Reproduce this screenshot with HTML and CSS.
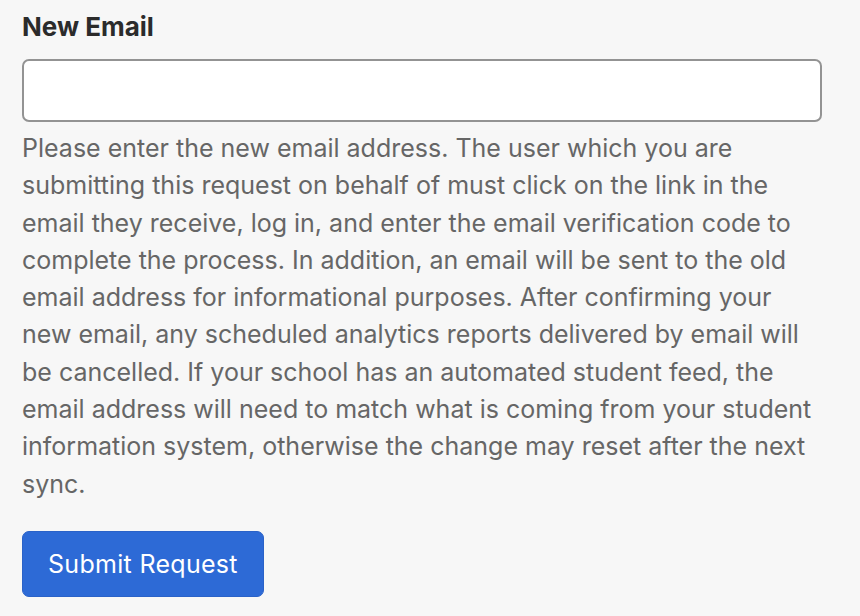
FILE: index.html
```html
<!DOCTYPE html>
<html>
<head>
<meta charset="utf-8">
<link rel="stylesheet" href="styles.css">
</head>
<body>
<form class="form">
  <label class="label" for="email">New Email</label>
  <input class="input" id="email" type="email">
  <p class="help">Please enter the new email address. The user which you are submitting this request on behalf of must click on the link in the email they receive, log in, and enter the email verification code to complete the process. In addition, an email will be sent to the old email address for informational purposes. After confirming your new email, any scheduled analytics reports delivered by email will be cancelled. If your school has an automated student feed, the email address will need to match what is coming from your student information system, otherwise the change may reset after the next sync.</p>
  <button class="btn" type="button">Submit Request</button>
</form>
</body>
</html>
```
FILE: styles.css
```css
html, body {
  margin: 0;
  padding: 0;
  background: #f7f7f7;
}
body {
  font-family: Inter, "Noto Sans", sans-serif;
}
.form {
  display: flex;
  flex-direction: column;
  align-items: flex-start;
  padding: 9px 38px 0 22px;
}
.label {
  font-size: 26px;
  font-weight: 700;
  color: #2b2b2b;
  line-height: 36px;
  letter-spacing: 0;
}
.input {
  box-sizing: border-box;
  width: 800px;
  height: 63px;
  margin: 14px 0 0 0;
  border: 2px solid #939393;
  border-radius: 7px;
  background: #fff;
}
.help {
  margin: 8px 0 0 0;
  font-size: 25px;
  line-height: 37.3px;
  color: #666;
  width: 800px;
}
.btn {
  margin-top: 28px;
  height: 66px;
  padding: 0 25px;
  border: 1px solid #2a62c8;
  border-radius: 7px;
  background: #2d6ad6;
  color: #fff;
  font-family: Inter, "Noto Sans", sans-serif;
  font-size: 25px;
  letter-spacing: 0.3px;
}
```
